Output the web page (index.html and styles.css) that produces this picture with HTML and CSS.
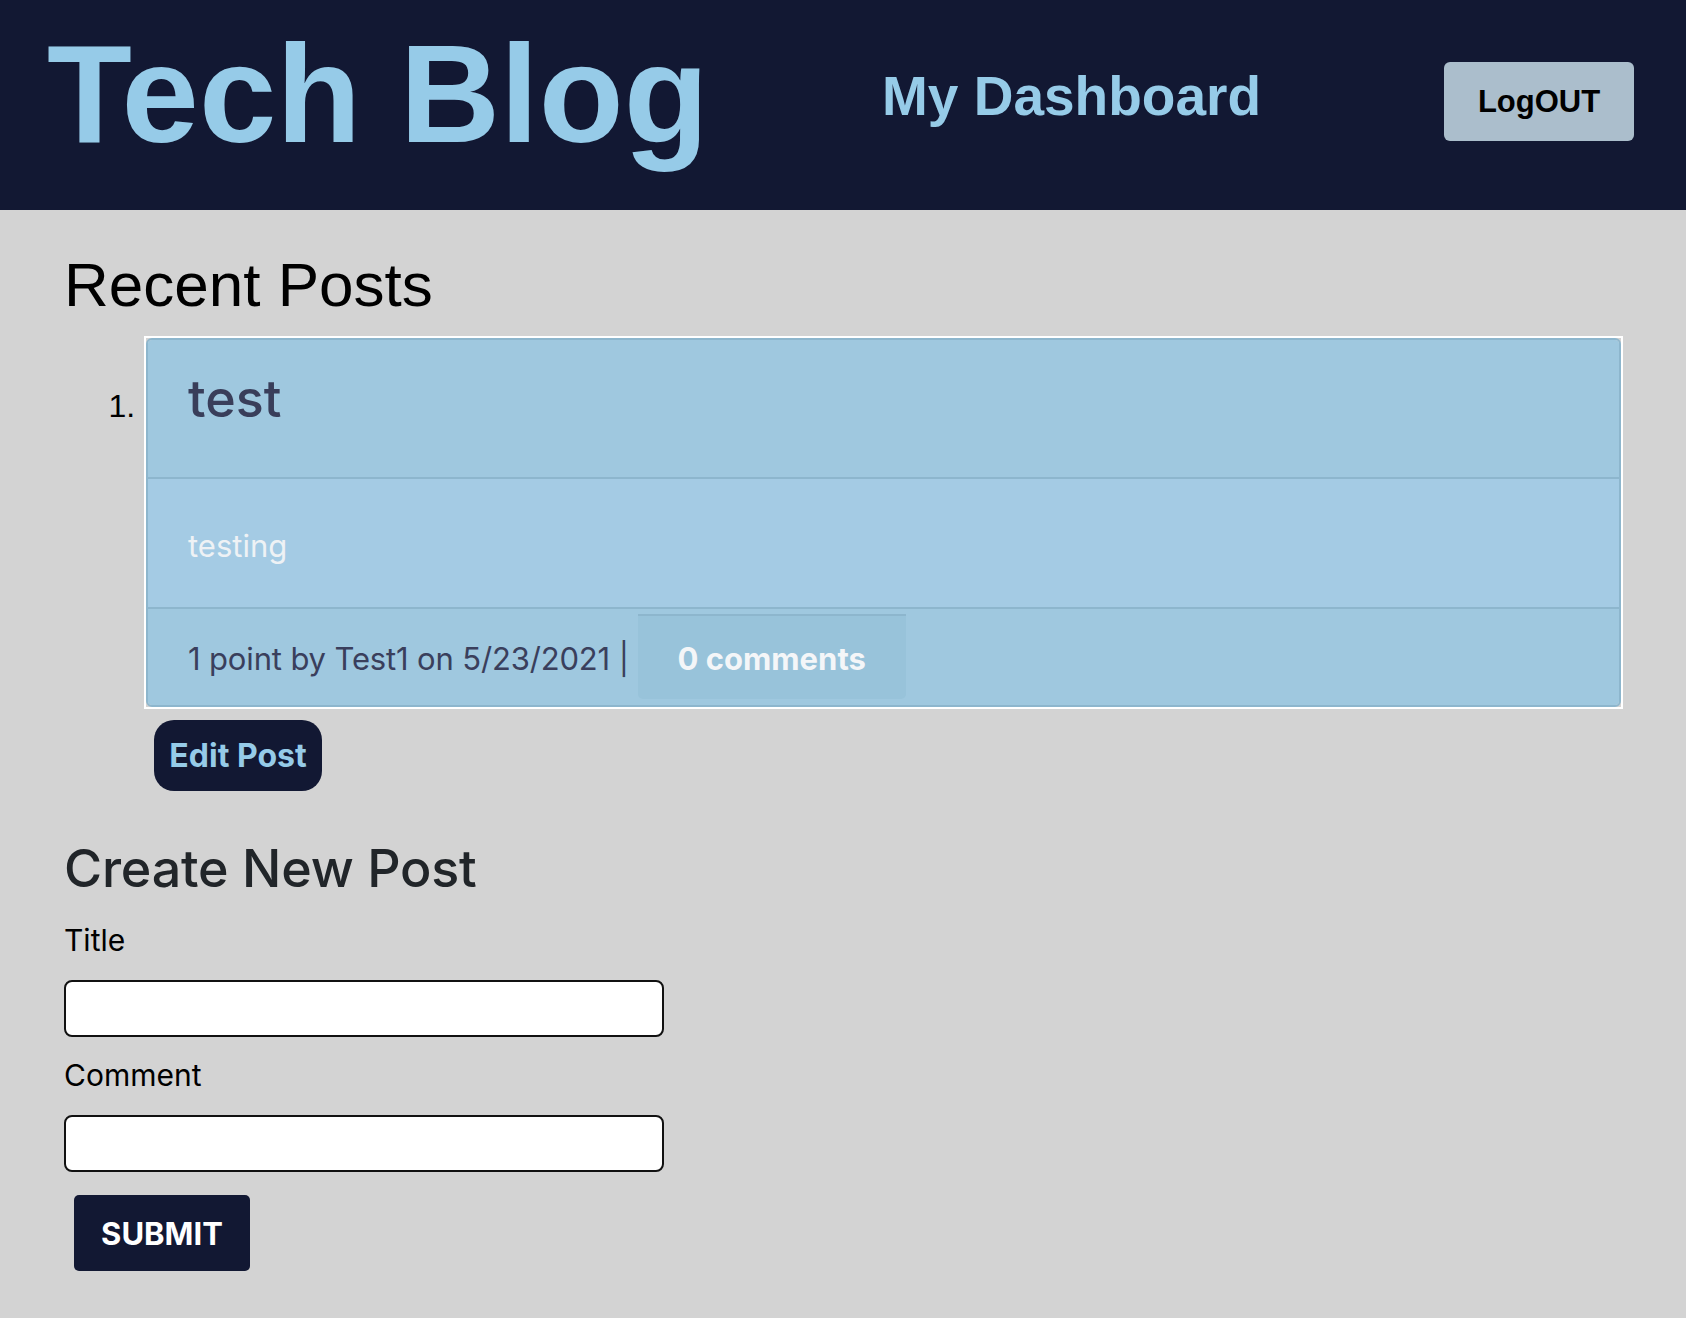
FILE: index.html
```html
<!DOCTYPE html>
<html lang="en">
<head>
<meta charset="utf-8">
<title>Tech Blog</title>
<link rel="stylesheet" href="styles.css">
</head>
<body>
<header class="site-header">
  <h1 class="brand">Tech Blog</h1>
  <a class="nav-link" href="#">My Dashboard</a>
  <button class="logout" type="button">LogOUT</button>
</header>
<main class="main">
  <h2 class="section-title">Recent Posts</h2>
  <ol class="post-list">
    <li class="post-item">
      <div class="post-frame">
        <div class="card">
          <div class="card-header"><h3 class="post-title">test</h3></div>
          <div class="card-body"><p class="post-text">testing</p></div>
          <div class="card-footer"><span class="meta">1 point by Test1 on 5/23/2021 |</span> <a class="comments" href="#">0 comments</a></div>
        </div>
      </div>
      <button class="edit-btn" type="button">Edit Post</button>
    </li>
  </ol>
  <h2 class="form-title">Create New Post</h2>
  <form class="post-form">
    <label class="field-label first" for="title">Title</label>
    <input class="field-input" id="title" type="text">
    <label class="field-label" for="comment">Comment</label>
    <input class="field-input" id="comment" type="text">
    <button class="submit-btn" type="button">SUBMIT</button>
  </form>
</main>
</body>
</html>
```

FILE: styles.css
```css
html, body {
  margin: 0;
  padding: 0;
  background: #d3d3d3;
}
body {
  font-family: Inter, "Noto Sans", sans-serif;
  min-height: 1318px;
}

/* header */
.site-header {
  display: flex;
  align-items: flex-start;
  height: 210px;
  background: #121833;
  box-sizing: border-box;
}
.brand {
  margin: 24px 0 0 47px;
  font: 700 139px/139px "Liberation Sans", Arial, sans-serif;
  color: #96cbe8;
  white-space: nowrap;
}
.nav-link {
  margin: 69px 183px 0 auto;
  font: 700 55px/55px "Liberation Sans", Arial, sans-serif;
  color: #96cbe8;
  text-decoration: none;
  white-space: nowrap;
}
.logout {
  margin: 62px 52px 0 0;
  width: 190px;
  height: 79px;
  padding: 0;
  border: none;
  border-radius: 6px;
  background: #abbecc;
  color: #000;
  font: 700 31px/31px "Liberation Sans", Arial, sans-serif;
}

/* main */
.main {
  padding: 0 63px 0 64px;
}
.section-title {
  margin: 44px 0 0;
  font: 400 62px/62px "Liberation Sans", Arial, sans-serif;
  color: #000;
}
.post-list {
  margin: 20px 0 0;
  padding: 0 0 0 80px;
  font: 400 32px "Liberation Sans", Arial, sans-serif;
  color: #000;
}
.post-frame {
  border: 2px solid #fff;
}
.card {
  border: 2px solid #8db6cd;
  border-radius: 6px;
  overflow: hidden;
  font-family: Inter, "Noto Sans", sans-serif;
}
.card-header {
  background: #9fc8df;
  padding: 28px 40px 47px;
  border-bottom: 2px solid #8db6cd;
}
.post-title {
  margin: 0;
  font: 500 52px/62px Inter, sans-serif;
  color: #393e5a;
}
.card-body {
  background: #a4cbe4;
  padding: 43px 40px 38px;
  border-bottom: 2px solid #8db6cd;
}
.post-text {
  margin: 0;
  font: 400 31px/47px Inter, sans-serif;
  color: #eef2f5;
}
.card-footer {
  background: #9fc8df;
  padding: 5px 40px 6px;
  font: 400 31px/46px Inter, sans-serif;
}
.meta {
  color: #3a3f5c;
  letter-spacing: -0.15px;
}
.comments {
  display: inline-block;
  background: #98c3da;
  border-top: 2px solid #8db6cd;
  border-radius: 0 0 5px 5px;
  padding: 20px 40px 17px;
  font-weight: 700;
  color: #f4f6f8;
  text-decoration: none;
}
.edit-btn {
  display: block;
  margin: 11px 0 0 10px;
  width: 168px;
  height: 71px;
  padding: 0;
  border: none;
  border-radius: 20px;
  background: #121833;
  color: #96cbe8;
  font: 700 32px Inter, sans-serif;
}

/* form */
.form-title {
  margin: 47px 0 0;
  font: 500 52px/62px Inter, sans-serif;
  letter-spacing: -0.2px;
  color: #212529;
}
.post-form {
  display: flex;
  flex-direction: column;
  align-items: flex-start;
}
.field-label {
  margin-top: 16px;
  font: 400 30px/45px Inter, sans-serif;
  color: #000;
}
.field-label.first {
  margin-top: 18px;
}
.field-input {
  margin: 17px 0 0;
  width: 600px;
  height: 57px;
  box-sizing: border-box;
  border: 2px solid #111;
  border-radius: 8px;
  background: #fff;
  font: 400 26px Inter, sans-serif;
}
.submit-btn {
  margin: 23px 0 0 10px;
  width: 176px;
  height: 76px;
  padding: 0;
  border: none;
  border-radius: 5px;
  background: #121833;
  color: #fff;
  font: 700 31px Inter, sans-serif;
}
```
